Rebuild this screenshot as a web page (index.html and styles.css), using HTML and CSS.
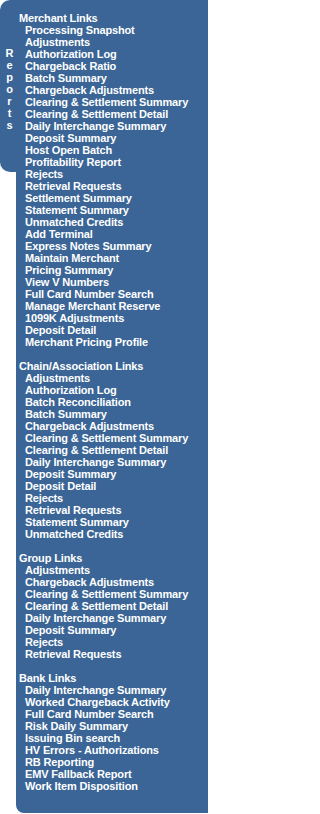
FILE: index.html
```html
<!DOCTYPE html>
<html>
<head>
<meta charset="utf-8">
<link rel="stylesheet" href="styles.css">
</head>
<body>
<div class="menu">
  <div class="tab">
    <span>R</span><span>e</span><span>p</span><span>o</span><span>r</span><span>t</span><span>s</span>
  </div>
  <div class="panel">
    <div class="group">
      <div class="head">Merchant Links</div>
      <ul class="links">
        <li>Processing Snapshot</li>
        <li>Adjustments</li>
        <li>Authorization Log</li>
        <li>Chargeback Ratio</li>
        <li>Batch Summary</li>
        <li>Chargeback Adjustments</li>
        <li>Clearing &amp; Settlement Summary</li>
        <li>Clearing &amp; Settlement Detail</li>
        <li>Daily Interchange Summary</li>
        <li>Deposit Summary</li>
        <li>Host Open Batch</li>
        <li>Profitability Report</li>
        <li>Rejects</li>
        <li>Retrieval Requests</li>
        <li>Settlement Summary</li>
        <li>Statement Summary</li>
        <li>Unmatched Credits</li>
        <li>Add Terminal</li>
        <li>Express Notes Summary</li>
        <li>Maintain Merchant</li>
        <li>Pricing Summary</li>
        <li>View V Numbers</li>
        <li>Full Card Number Search</li>
        <li>Manage Merchant Reserve</li>
        <li>1099K Adjustments</li>
        <li>Deposit Detail</li>
        <li>Merchant Pricing Profile</li>
      </ul>
    </div>
    <div class="group">
      <div class="head">Chain/Association Links</div>
      <ul class="links">
        <li>Adjustments</li>
        <li>Authorization Log</li>
        <li>Batch Reconciliation</li>
        <li>Batch Summary</li>
        <li>Chargeback Adjustments</li>
        <li>Clearing &amp; Settlement Summary</li>
        <li>Clearing &amp; Settlement Detail</li>
        <li>Daily Interchange Summary</li>
        <li>Deposit Summary</li>
        <li>Deposit Detail</li>
        <li>Rejects</li>
        <li>Retrieval Requests</li>
        <li>Statement Summary</li>
        <li>Unmatched Credits</li>
      </ul>
    </div>
    <div class="group">
      <div class="head">Group Links</div>
      <ul class="links">
        <li>Adjustments</li>
        <li>Chargeback Adjustments</li>
        <li>Clearing &amp; Settlement Summary</li>
        <li>Clearing &amp; Settlement Detail</li>
        <li>Daily Interchange Summary</li>
        <li>Deposit Summary</li>
        <li>Rejects</li>
        <li>Retrieval Requests</li>
      </ul>
    </div>
    <div class="group">
      <div class="head">Bank Links</div>
      <ul class="links">
        <li>Daily Interchange Summary</li>
        <li>Worked Chargeback Activity</li>
        <li>Full Card Number Search</li>
        <li>Risk Daily Summary</li>
        <li>Issuing Bin search</li>
        <li>HV Errors - Authorizations</li>
        <li>RB Reporting</li>
        <li>EMV Fallback Report</li>
        <li>Work Item Disposition</li>
      </ul>
    </div>
  </div>
</div>
</body>
</html>
```
FILE: styles.css
```css
html, body {
  margin: 0;
  padding: 0;
  background: #ffffff;
}
body {
  font-family: "Liberation Sans", Arial, sans-serif;
  font-size: 11px;
  font-weight: bold;
  line-height: 12px;
  color: #ffffff;
}
.menu {
  display: flex;
  align-items: flex-start;
  width: 208px;
}
.tab {
  width: 16px;
  flex: 0 0 16px;
  height: 172px;
  box-sizing: border-box;
  padding-top: 47px;
  padding-left: 3px;
  background: #3a6596;
  border-radius: 10px 0 0 10px;
  display: flex;
  flex-direction: column;
  align-items: center;
}
.tab span {
  display: block;
  width: 14px;
  text-align: center;
}
.panel {
  flex: 1;
  background: #3a6596;
  border-bottom-left-radius: 8px;
  padding: 12px 0 21px 3px;
  display: flex;
  flex-direction: column;
  gap: 12px;
  white-space: nowrap;
  letter-spacing: -0.15px;
}
.head {
  height: 12px;
}
.links {
  list-style: none;
  margin: 0;
  padding: 0 0 0 6px;
}
.links li {
  height: 12px;
}
```
